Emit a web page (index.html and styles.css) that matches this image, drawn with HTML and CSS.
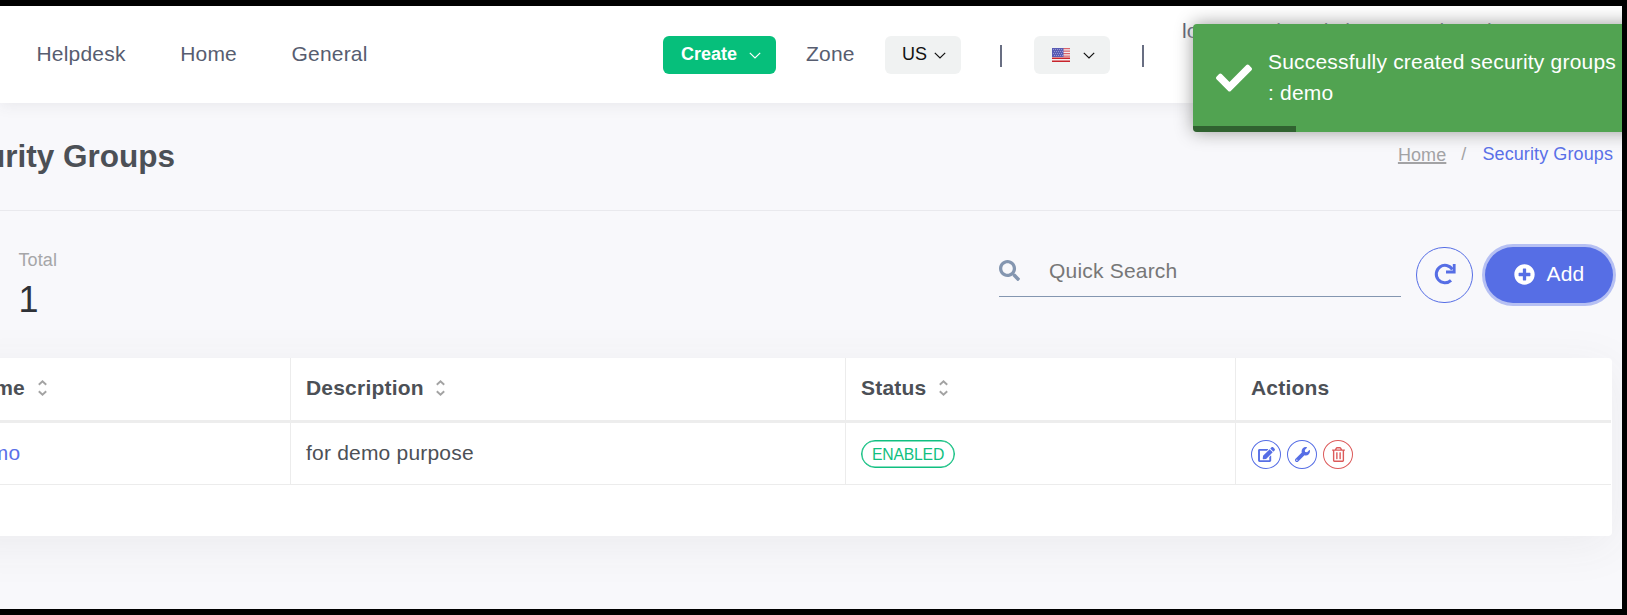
FILE: index.html
```html
<!DOCTYPE html>
<html lang="en">
<head>
<meta charset="utf-8">
<title>Security Groups</title>
<link rel="stylesheet" href="styles.css">
</head>
<body>
<div class="screen">
  <header class="topbar">
    <nav class="nav"><a>Helpdesk</a><a>Home</a><a>General</a></nav>
    <div class="tools">
      <button class="btn-create">Create
        <svg class="chev" viewBox="0 0 12 7"><path d="M.8.8 6 6 11.2.8"/></svg>
      </button>
      <span class="zone">Zone</span>
      <button class="select">US
        <svg class="chev" viewBox="0 0 12 7"><path d="M.8.8 6 6 11.2.8"/></svg>
      </button>
      <span class="bar bar-first"></span>
      <button class="select select-flag">
        <svg class="flag" viewBox="0 0 18 14">
          <rect width="18" height="14" fill="#f6eeee"/>
          <path fill="#d9636a" d="M0 0h18v1.3H0zM0 2.5h18v1.3H0zM0 5h18v1.3H0zM0 7.4h18v1.3H0z"/>
          <path fill="#c8242c" d="M0 9.6h18v1.5H0zM0 12.4h18V14H0z"/>
          <rect width="11.5" height="9" fill="#5a5cb4"/>
          <path stroke="#a5a7dc" stroke-width=".8" stroke-dasharray="1 1" d="M1 1.5h10M2 3.5h9M1 5.5h10M2 7.5h9"/>
        </svg>
        <svg class="chev" viewBox="0 0 12 7"><path d="M.8.8 6 6 11.2.8"/></svg>
      </button>
      <span class="bar bar-second"></span>
      <span class="account">loremtest loands loremtest loand</span>
    </div>
  </header>

  <section class="page-head">
    <h1>Security Groups</h1>
    <div class="crumbs"><a class="crumb-home">Home</a><span class="slash">/</span><span class="crumb-here">Security Groups</span></div>
  </section>

  <section class="controls">
    <div class="total"><span class="total-label">Total</span><span class="total-value">1</span></div>
    <div class="search">
      <svg class="search-icon" viewBox="0 0 512 512"><path fill="currentColor" d="M505 442.700L405.300 343c-4.500-4.500-10.600-7-17-7H372c27.600-35.300 44-79.700 44-128C416 93.100 322.900 0 208 0S0 93.100 0 208s93.100 208 208 208c48.300 0 92.700-16.400 128-44v16.300c0 6.400 2.500 12.500 7 17l99.700 99.700c9.400 9.400 24.600 9.400 33.900 0l28.300-28.300c9.400-9.400 9.400-24.600.1-34zM208 336c-70.700 0-128-57.200-128-128 0-70.700 57.200-128 128-128 70.700 0 128 57.200 128 128 0 70.700-57.200 128-128 128z"/></svg>
      <span>Quick Search</span>
    </div>
    <button class="btn-refresh" aria-label="Refresh">
      <svg viewBox="0 0 22 22"><path fill="none" stroke="currentColor" stroke-width="3" d="M17 17.300A8.700 8.700 0 1 1 18.400 6.500"/><path fill="currentColor" d="M18.800 1H21.600v9.600H12V7.600h6.800z"/></svg>
    </button>
    <button class="btn-add">
      <svg viewBox="0 0 512 512"><path fill="currentColor" d="M256 8C119 8 8 119 8 256s111 248 248 248 248-111 248-248S393 8 256 8zm144 276c0 6.600-5.400 12-12 12h-92v92c0 6.600-5.400 12-12 12h-56c-6.600 0-12-5.400-12-12v-92h-92c-6.600 0-12-5.400-12-12v-56c0-6.600 5.400-12 12-12h92v-92c0-6.600 5.400-12 12-12h56c6.600 0 12 5.400 12 12v92h92c6.600 0 12 5.400 12 12v56z"/></svg>
      Add
    </button>
  </section>

  <section class="card">
    <div class="row row-head">
      <div class="cell">Name<svg class="sort" viewBox="0 0 9 16"><path d="M.8 4.800 4.500 1.300 8.200 4.800M.8 11.200l3.700 3.500 3.700-3.500"/></svg></div>
      <div class="cell">Description<svg class="sort" viewBox="0 0 9 16"><path d="M.8 4.800 4.500 1.300 8.200 4.800M.8 11.200l3.700 3.500 3.700-3.500"/></svg></div>
      <div class="cell">Status<svg class="sort" viewBox="0 0 9 16"><path d="M.8 4.800 4.500 1.300 8.200 4.800M.8 11.200l3.700 3.500 3.700-3.500"/></svg></div>
      <div class="cell">Actions</div>
    </div>
    <div class="row row-body">
      <div class="cell"><a class="link">demo</a></div>
      <div class="cell">for demo purpose</div>
      <div class="cell cell-status"><span class="badge">ENABLED</span></div>
      <div class="cell actions">
        <button class="act" aria-label="Edit"><svg width="17" height="15" viewBox="0 0 576 512"><path fill="currentColor" d="M402.600 83.200l90.200 90.200c3.800 3.800 3.800 10 0 13.800L274.400 405.600l-92.800 10.300c-12.400 1.400-22.900-9.100-21.500-21.500l10.300-92.800L388.800 83.200c3.800-3.800 10-3.800 13.800 0zm162-22.900l-48.800-48.800c-15.200-15.200-39.900-15.200-55.200 0l-35.400 35.400c-3.800 3.800-3.800 10 0 13.800l90.200 90.200c3.800 3.800 10 3.800 13.800 0l35.400-35.400c15.200-15.300 15.200-40 0-55.200zM384 346.200V448H64V128h229.800c3.200 0 6.200-1.300 8.500-3.500l40-40c7.600-7.600 2.200-20.500-8.500-20.500H48C21.500 64 0 85.500 0 112v352c0 26.500 21.500 48 48 48h352c26.500 0 48-21.500 48-48V306.200c0-10.700-12.900-16-20.500-8.500l-40 40c-2.200 2.300-3.500 5.300-3.500 8.500z"/></svg></button>
        <button class="act" aria-label="Configure"><svg width="15" height="15" viewBox="0 0 512 512"><path fill="currentColor" d="M507.700 109.100c-2.200-9-13.500-12.100-20.100-5.500l-74.400 74.400-67.900-11.300L334 98.900l74.400-74.400c6.600-6.600 3.400-17.900-5.700-20.200-47.400-11.700-99.600.9-136.600 37.900-39.600 39.600-50.500 97.100-34.100 147.200L18.700 402.800c-25 25-25 65.500 0 90.500s65.500 25 90.500 0l213.200-213.200c50.100 16.700 107.500 5.700 147.400-34.200 37.100-37.100 49.700-89.300 37.900-136.800zM64 472c-13.200 0-24-10.800-24-24 0-13.300 10.700-24 24-24s24 10.700 24 24c0 13.200-10.700 24-24 24z"/></svg></button>
        <button class="act act-danger" aria-label="Delete"><svg width="13" height="15" viewBox="0 0 448 512"><path fill="currentColor" d="M268 416h24a12 12 0 0 0 12-12V188a12 12 0 0 0-12-12h-24a12 12 0 0 0-12 12v216a12 12 0 0 0 12 12zM432 80h-82.400l-34-56.700A48 48 0 0 0 274.400 0H173.600a48 48 0 0 0-41.200 23.300L98.400 80H16A16 16 0 0 0 0 96v16a16 16 0 0 0 16 16h16v336a48 48 0 0 0 48 48h288a48 48 0 0 0 48-48V128h16a16 16 0 0 0 16-16V96a16 16 0 0 0-16-16zM171.800 51a6 6 0 0 1 5.200-3h94a6 6 0 0 1 5.200 3l17.400 29H154.400zM368 464H80V128h288zM156 416h24a12 12 0 0 0 12-12V188a12 12 0 0 0-12-12h-24a12 12 0 0 0-12 12v216a12 12 0 0 0 12 12z"/></svg></button>
      </div>
    </div>
  </section>

  <div class="toast">
    <svg class="toast-icon" viewBox="0 0 512 512"><path fill="#fff" d="M173.900 439.400l-166.400-166.400c-10-10-10-26.200 0-36.200l36.200-36.200c10-10 26.200-10 36.200 0L192 312.700 432.100 72.600c10-10 26.200-10 36.200 0l36.200 36.200c10 10 10 26.200 0 36.200l-294.400 294.400c-10 10-26.200 10-36.200 0z"/></svg>
    <div class="toast-text">Successfully created security groups : demo</div>
    <div class="toast-progress"></div>
  </div>
</div>
</body>
</html>
```
FILE: styles.css
```css
* { box-sizing: border-box; }
body {
  margin: 0;
  width: 1627px;
  height: 615px;
  overflow: hidden;
  background: #000;
  padding-top: 6px;
  font-family: "Liberation Sans", Arial, sans-serif;
  font-size: 21px;
  letter-spacing: .2px;
  color: #4c5056;
}
button { font: inherit; letter-spacing: inherit; border: 0; padding: 0; }
svg { display: block; flex: none; }

.screen {
  position: relative;
  width: 1622px;
  height: 603px;
  overflow: hidden;
  background: #f8f8fb;
}

/* top bar */
.topbar {
  position: relative;
  height: 97px;
  display: flex;
  justify-content: space-between;
  background: #fff;
  box-shadow: 0 1px 15px rgba(69, 65, 78, .1);
  color: #575d70;
}
.nav { display: flex; align-items: center; gap: 54.5px; padding-left: 36.5px; height: 96px; }
.tools { display: flex; align-items: flex-start; padding-top: 30px; width: 959px; white-space: nowrap; }
.btn-create, .select {
  height: 38px;
  border-radius: 6px;
  display: flex;
  align-items: center;
  font-size: 18px;
  letter-spacing: 0;
  flex: none;
}
.btn-create { width: 113px; padding: 0 0 2px 18px; gap: 12px; background: #06bf7b; color: #fff; font-weight: 700; }
.select { width: 76px; padding: 0 0 2px 17px; gap: 7px; background: #f0f2f2; color: #111; }
.select-flag { margin-left: 32px; gap: 13px; padding: 0 0 0 18px; }
.chev { width: 12px; height: 7px; margin-top: 3px; fill: none; stroke: currentColor; stroke-width: 1.2; }
.select-flag .chev { margin-top: 1px; }
.flag { width: 18px; height: 14px; }
.zone { margin: 0 30px; line-height: 36px; width: 49px; }
.bar { width: 2px; height: 22px; margin-top: 9px; background: #686e82; flex: none; }
.bar-first { margin-left: 39px; }
.bar-second { margin-left: 32px; }
.account { margin: -17px 0 0 38px; line-height: 24px; width: 430px; flex: none; }

/* title */
.page-head {
  height: 108px;
  display: flex;
  justify-content: space-between;
  align-items: flex-start;
  border-bottom: 1px solid #e9e9ed;
  padding: 35px 9px 0 0;
}
h1 { margin: 0 0 0 -70px; font-size: 31.5px; line-height: 36px; letter-spacing: 0; white-space: nowrap; }
.crumbs { display: flex; font-size: 18px; letter-spacing: .1px; line-height: 26px; padding-top: 3px; }
.crumb-home { color: #a3a3a5; text-decoration: underline; text-decoration-thickness: 2px; padding-top: 1px; }
.slash { color: #a3a3a5; margin: 0 16px 0 15px; }
.crumb-here { color: #5a70e8; }

/* totals and search */
.controls { display: flex; align-items: flex-start; height: 147px; padding: 36px 9px 0 18.5px; }
.total { display: flex; flex-direction: column; flex: 1; }
.total-label { font-size: 18px; line-height: 26px; letter-spacing: .1px; color: #a6a6a8; }
.total-value { font-size: 36px; line-height: 54px; letter-spacing: 0; color: #2f3237; }
.search {
  width: 402px;
  height: 50px;
  display: flex;
  align-items: center;
  gap: 28px;
  padding-bottom: 2px;
  border-bottom: 1px solid #8496b0;
  color: #777;
}
.search-icon { width: 21px; height: 21px; margin: 0 1px 0 0; color: #8496b0; }
.btn-refresh {
  width: 57px;
  height: 56px;
  margin-left: 15px;
  border: 1px solid #566ee5;
  border-radius: 28px;
  padding-bottom: 2px;
  background: transparent;
  color: #566ee5;
  display: flex;
  align-items: center;
  justify-content: center;
}
.btn-refresh svg { width: 22px; height: 22px; }
.btn-add {
  width: 128px;
  height: 56px;
  margin-left: 12px;
  border-radius: 28px;
  padding-bottom: 2px;
  background: #566ee5;
  box-shadow: 0 0 0 3px #b6c0f3;
  color: #fff;
  display: flex;
  align-items: center;
  justify-content: center;
  gap: 12px;
}
.btn-add svg { width: 21px; height: 21px; }
.btn-refresh, .btn-add, .search { flex: none; }

/* table */
.card {
  width: 1663px;
  margin-left: -51px;
  height: 178px;
  background: #fff;
  border-radius: 4px;
  box-shadow: 0 9px 48px rgba(72, 72, 72, .07);
}
.row {
  display: grid;
  grid-template-columns: 342px 555px 390px 375px;
  width: 1662px;
}
.cell { display: flex; align-items: center; padding: 0 0 2px 15px; border-right: 1px solid #ececec; white-space: nowrap; }
.cell:last-child { border-right: 0; }
.row-head { height: 65px; border-bottom: 3px solid #ededed; font-weight: 700; }
.row-body { height: 62px; border-bottom: 1px solid #ececec; }
.cell:first-child { padding-left: 18px; }
.sort { width: 9px; height: 16px; margin: 0 0 0 12.5px; fill: none; stroke: #a3a3a3; stroke-width: 1.9; }
.link { color: #5a70e8; }
.cell-status { padding-bottom: 0; }
.badge {
  width: 94px;
  height: 28px;
  border: 1px solid #10bf80;
  box-shadow: inset 0 0 0 .5px #10bf80;
  border-radius: 14px;
  color: #10bf80;
  font-size: 15.75px;
  letter-spacing: -.2px;
  line-height: 27px;
  text-align: center;
}
.cell.actions { gap: 6px; padding-bottom: 0; }
.act {
  width: 30px;
  height: 29px;
  margin-top: 1px;
  border: 1px solid #566ee5;
  border-radius: 50%;
  background: none;
  color: #566ee5;
  display: flex;
  align-items: center;
  justify-content: center;
}
.act-danger { color: #dc5a5a; border-color: #dc5a5a; }

/* notification */
.toast {
  position: absolute;
  left: 1193px;
  top: 18px;
  width: 450px;
  height: 108px;
  padding: 21.5px 22px 22.5px 75px;
  border-radius: 4px;
  overflow: hidden;
  background: #51a351;
  box-shadow: 0 0 18px #999;
  color: #fff;
  line-height: 31.5px;
}
.toast-icon { position: absolute; left: 23px; top: 36px; width: 36px; height: 36px; }
.toast-progress { position: absolute; left: 0; bottom: 0; width: 103px; height: 6px; background: #000; opacity: .4; }
```
